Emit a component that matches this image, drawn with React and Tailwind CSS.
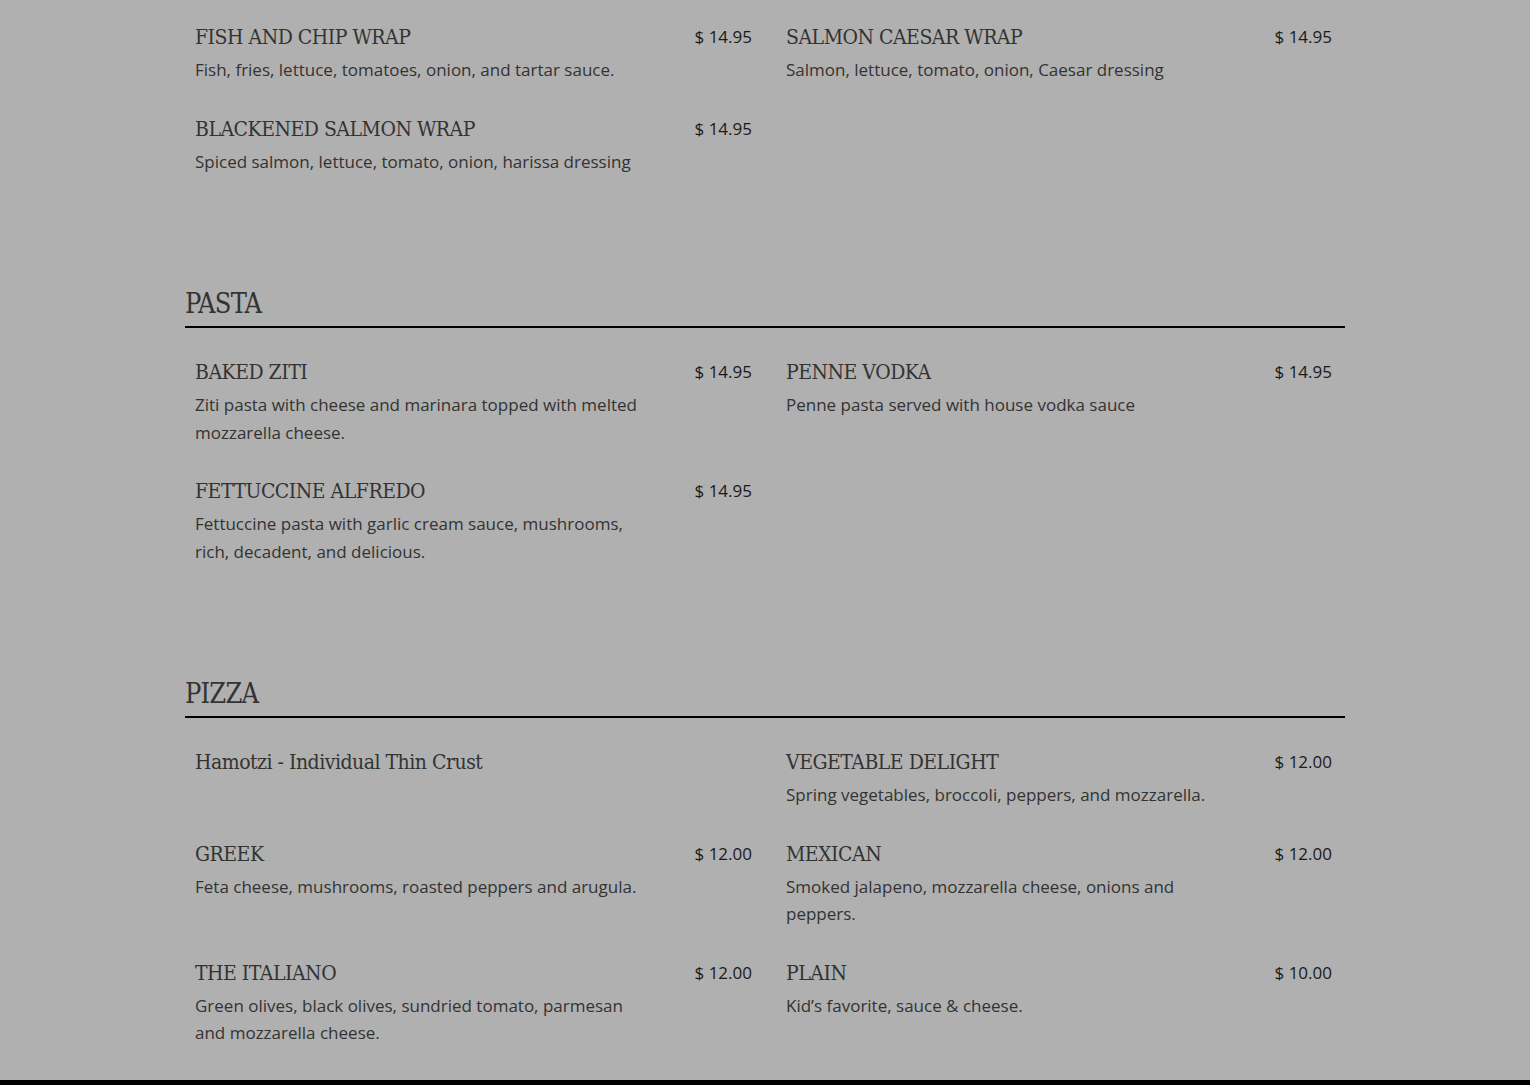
import React from 'react';

const sections = [
  {
    title: null,
    items: [
      { name: 'FISH AND CHIP WRAP', price: '$ 14.95', desc: 'Fish, fries, lettuce, tomatoes, onion, and tartar sauce.' },
      { name: 'SALMON CAESAR WRAP', price: '$ 14.95', desc: 'Salmon, lettuce, tomato, onion, Caesar dressing' },
      { name: 'BLACKENED SALMON WRAP', price: '$ 14.95', desc: 'Spiced salmon, lettuce, tomato, onion, harissa dressing' },
      null,
    ],
  },
  {
    title: 'PASTA',
    items: [
      { name: 'BAKED ZITI', price: '$ 14.95', desc: 'Ziti pasta with cheese and marinara topped with melted mozzarella cheese.' },
      { name: 'PENNE VODKA', price: '$ 14.95', desc: 'Penne pasta served with house vodka sauce' },
      { name: 'FETTUCCINE ALFREDO', price: '$ 14.95', desc: 'Fettuccine pasta with garlic cream sauce, mushrooms, rich, decadent, and delicious.' },
      null,
    ],
  },
  {
    title: 'PIZZA',
    items: [
      { name: 'Hamotzi - Individual Thin Crust' },
      { name: 'VEGETABLE DELIGHT', price: '$ 12.00', desc: 'Spring vegetables, broccoli, peppers, and mozzarella.' },
      { name: 'GREEK', price: '$ 12.00', desc: 'Feta cheese, mushrooms, roasted peppers and arugula.' },
      { name: 'MEXICAN', price: '$ 12.00', desc: 'Smoked jalapeno, mozzarella cheese, onions and peppers.' },
      { name: 'THE ITALIANO', price: '$ 12.00', desc: 'Green olives, black olives, sundried tomato, parmesan and mozzarella cheese.' },
      { name: 'PLAIN', price: '$ 10.00', desc: 'Kid’s favorite, sauce & cheese.' },
    ],
  },
];

const slab = { fontFamily: '"DejaVu Serif Condensed", "DejaVu Serif", serif' };
const sans = { fontFamily: '"Open Sans", "Liberation Sans", sans-serif' };

function MenuItem({ item }) {
  if (!item) return <div />;
  return (
    <div className="pb-[29px]">
      <div className="flex items-start justify-between">
        <h3 className="text-[21px] leading-[32px] tracking-[-0.5px] text-[#333]" style={slab}>
          {item.name}
        </h3>
        {item.price && (
          <span className="text-[17px] leading-[32px] text-[#1a1a1a]" style={sans}>
            {item.price}
          </span>
        )}
      </div>
      {item.desc && (
        <p className="mt-[3px] max-w-[448px] text-[17px] leading-[27.5px] text-[#333]" style={sans}>
          {item.desc}
        </p>
      )}
    </div>
  );
}

export default function App() {
  return (
    <div className="min-h-[1085px] bg-[#b0b0b0] flex flex-col">
      <div className="w-[1160px] ml-[185px] pt-[21px] flex-1">
        {sections.map((section, i) => (
          <div key={i} className={section.title ? 'mt-[80px]' : ''}>
            {section.title && (
              <div className="mb-[28px]">
                <h2 className="text-[27px] leading-[40px] tracking-[-0.8px] text-[#333]" style={slab}>
                  {section.title}
                </h2>
                <div className="mt-[2px] h-[2px] bg-black" />
              </div>
            )}
            <div className="pl-[10px] grid grid-cols-[557px_546px] gap-x-[34px]">
              {section.items.map((item, j) => (
                <MenuItem key={j} item={item} />
              ))}
            </div>
          </div>
        ))}
      </div>
      <div className="h-[5px] bg-black" />
    </div>
  );
}
